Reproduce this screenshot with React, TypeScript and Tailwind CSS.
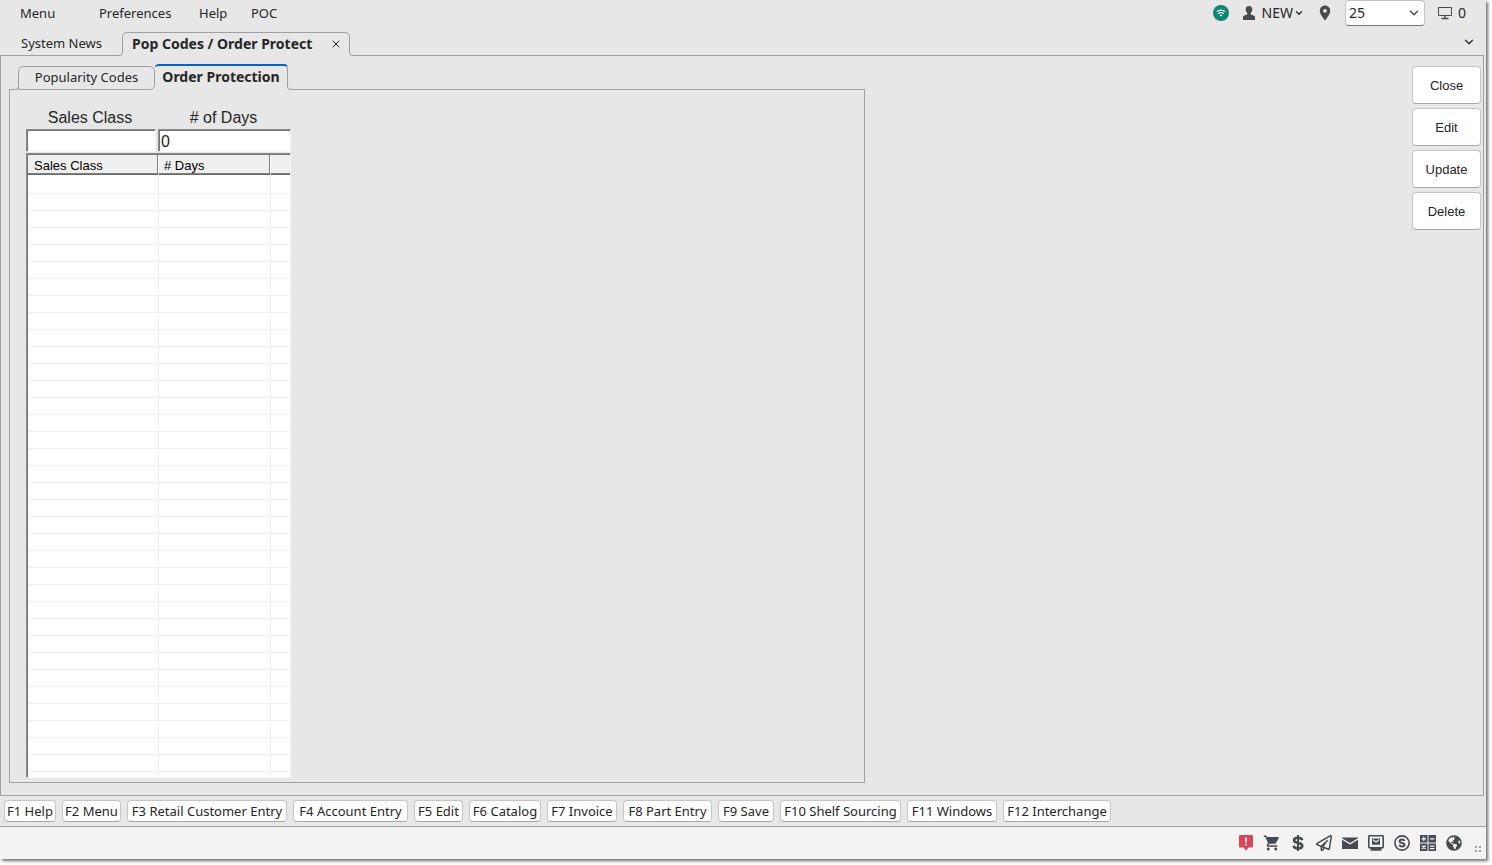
import { useState } from 'react';
import type { ReactNode } from 'react';
import { ChevronDown, X } from 'lucide-react';
import { FaRegPaperPlane, FaGlobeAmericas } from 'react-icons/fa';
import { MdShoppingCart, MdLocationOn } from 'react-icons/md';

const functionKeys = [
  { label: 'F1 Help', width: 'w-[52px]' },
  { label: 'F2 Menu', width: 'w-[59px]' },
  { label: 'F3 Retail Customer Entry', width: 'w-[160px]' },
  { label: 'F4 Account Entry', width: 'w-[115px]' },
  { label: 'F5 Edit', width: 'w-[49px]' },
  { label: 'F6 Catalog', width: 'w-[72px]' },
  { label: 'F7 Invoice', width: 'w-[70px]' },
  { label: 'F8 Part Entry', width: 'w-[89px]' },
  { label: 'F9 Save', width: 'w-[56px]' },
  { label: 'F10 Shelf Sourcing', width: 'w-[121px]' },
  { label: 'F11 Windows', width: 'w-[90px]' },
  { label: 'F12 Interchange', width: 'w-[108px]' },
];

const actions = ['Close', 'Edit', 'Update', 'Delete'];

const emptyRows = Array.from({ length: 36 }, (_, i) => i);

function WifiBadge() {
  return (
    <svg className="h-4 w-4" viewBox="0 0 16 16" fill="none">
      <circle cx="8" cy="8" r="8" fill="#0f8573" />
      <path d="M3.8 6.8a6 6 0 0 1 8.4 0M5.4 8.7a3.7 3.7 0 0 1 5.2 0" stroke="#fff" strokeWidth="1.2" />
      <path d="M6.6 10.2a2 2 0 0 1 2.8 0L8 11.6z" fill="#fff" />
    </svg>
  );
}

function UserIcon() {
  return (
    <svg className="h-4 w-3" viewBox="0 0 12 16" fill="currentColor">
      <path d="M6 1c2.200 0 3.300 1.400 3.300 3.300 0 1.600-.7 3-1.500 3.700v1.400l2.800 1c.9.300 1.400.9 1.400 1.900V15H0v-2.700c0-1 .5-1.600 1.400-1.900l2.800-1V8c-.8-.7-1.500-2.100-1.500-3.700C2.700 2.400 3.800 1 6 1z" />
    </svg>
  );
}

function MonitorIcon() {
  return (
    <svg className="h-4 w-4" viewBox="0 0 16 16" fill="none" stroke="currentColor">
      <path d="M1.500 2.500h13v8h-13z" />
      <path d="M8 10.500v3M4.500 13.500h7" strokeWidth="1.400" />
    </svg>
  );
}

function AlertIcon() {
  return (
    <svg className="h-4 w-4" viewBox="0 0 16 16">
      <path d="M2 0h12a1 1 0 0 1 1 1v10.500a1 1 0 0 1-1 1h-3.500L8 15.500l-2.500-3H2a1 1 0 0 1-1-1V1a1 1 0 0 1 1-1z" fill="#d9485a" />
      <path d="M8 2.500v5M8 8.800v1.700" stroke="#fff" strokeWidth="1.600" />
    </svg>
  );
}

function DollarIcon() {
  return (
    <svg className="h-4 w-4" viewBox="0 0 16 16" fill="none" stroke="currentColor">
      <path d="M12.200 5.200C11.800 3.600 10.300 2.700 8 2.700S4.100 3.600 4.100 5.200c0 3.900 8.200 1.500 8.200 5.500 0 1.700-1.700 2.700-4.300 2.700S3.900 12.400 3.600 10.700" strokeWidth="2.600" />
      <path d="M8 0v16" strokeWidth="2" />
    </svg>
  );
}

function MailIcon() {
  return (
    <svg className="h-4 w-4" viewBox="0 0 16 16" fill="currentColor">
      <path d="M0 3.200 8 8l8-4.800V2.500H0z" />
      <path d="M0 4.700v9.300h16V4.700L8 9.500z" />
    </svg>
  );
}

function MailScreenIcon() {
  return (
    <svg className="h-4 w-4" viewBox="0 0 16 16" fill="none">
      <path d="M1.500.8h13q.7 0 .7.700v10.500q0 .7-.7.700h-13q-.7 0-.7-.7V1.500q0-.7.700-.7z" stroke="currentColor" strokeWidth="1.600" />
      <path d="M4 3.500h8v6.200H4z" fill="currentColor" />
      <path d="m5 4.800 3 2.200 3-2.200" stroke="#f3f3f3" strokeWidth="1.200" />
      <path d="M2.500 13h11v2.700h-11z" fill="currentColor" />
    </svg>
  );
}

function CircleSIcon() {
  return (
    <svg className="h-4 w-4" viewBox="0 0 16 16" fill="none" stroke="currentColor">
      <circle cx="8" cy="8" r="7.100" strokeWidth="1.600" />
      <path d="M10.500 6c-.3-1-1.200-1.500-2.500-1.500S5.600 5.100 5.600 6.200c0 2.500 4.900 1 4.900 3.500 0 1.200-1.100 1.800-2.500 1.800s-2.400-.6-2.700-1.700" strokeWidth="1.900" />
    </svg>
  );
}

function CalculatorIcon() {
  return (
    <svg className="h-4 w-4" viewBox="0 0 16 16" fill="none">
      <path d="M0 0h7.500v7.500H0zM8.500 0H16v7.500H8.500zM0 8.500h7.500V16H0zM8.500 8.500H16V16H8.500z" fill="currentColor" />
      <path
        d="M3.800 1.500v4.500M1.500 3.800h4.500M10 3.800h4.500M2 10.500l3.500 3.500M5.500 10.500 2 14M10 11.200h4.500M10 13.600h4.500"
        stroke="#f3f3f3"
        strokeWidth="1.200"
      />
    </svg>
  );
}

function Grip() {
  return (
    <svg className="h-2 w-2" viewBox="0 0 8 8" fill="#9a9a9a">
      <path d="M1 1h2v2H1zM5 1h2v2H5zM1 5h2v2H1zM5 5h2v2H5z" />
    </svg>
  );
}

function StatusButton({ label, children }: { label: string; children: ReactNode }) {
  return (
    <button aria-label={label} className="flex h-4 w-4 items-center justify-center">
      {children}
    </button>
  );
}

export default function App() {
  const [store, setStore] = useState('25');
  const [salesClass, setSalesClass] = useState('');
  const [days, setDays] = useState('0');

  return (
    <div className="h-screen bg-white pr-1.5 pb-1.5 font-['Noto_Sans',sans-serif] text-[13px] text-[#262626]">
      <div className="flex h-full flex-col bg-[#e7e7e7] shadow-[2px_2px_3px_#707070]">
        <header className="flex h-7 shrink-0 items-start justify-between pr-5 pl-5">
          <nav className="flex leading-[26px]">
            <button className="w-[79px] text-left">Menu</button>
            <button className="w-[100px] text-left">Preferences</button>
            <button className="w-[52px] text-left">Help</button>
            <button className="text-left">POC</button>
          </nav>
          <div className="flex h-[26px] items-center text-sm text-[#454b50]">
            <WifiBadge />
            <button className="ml-[14px] flex items-center text-[#262626]">
              <span className="text-[#454b50]"><UserIcon /></span>
              <span className="ml-[7px]">NEW</span>
              <ChevronDown className="ml-px h-2.5 w-2.5" strokeWidth={3} />
            </button>
            <MdLocationOn className="ml-3 h-[18px] w-[18px]" />
            <div className="relative ml-[11px]">
              <select
                aria-label="Store"
                value={store}
                onChange={(e) => setStore(e.target.value)}
                className="h-[26px] w-20 appearance-none rounded border border-[#c4c4c4] border-b-[#777] bg-white pl-[3px] text-[#262626]"
              >
                <option value="25">25</option>
              </select>
              <ChevronDown className="pointer-events-none absolute top-1.5 right-1 h-3.5 w-3.5" strokeWidth={2.4} />
            </div>
            <span className="ml-3 flex items-center gap-[5px]">
              <MonitorIcon />
              <span className="text-[#262626]">0</span>
            </span>
          </div>
        </header>

        {/* window tabs */}
        <div className="flex h-7 shrink-0 items-end pr-0.5">
          <button className="h-7 w-[118px] border-b border-[#a0a0a0] pt-1 pl-[21px] text-left">System News</button>
          <div className="h-[5px] w-[5px] rounded-br border-r border-b border-[#a0a0a0]" />
          <div className="-ml-px flex h-6 items-start">
            <div className="flex h-[19px] w-[228px] items-start justify-between rounded-t-[5px] border border-b-0 border-[#a0a0a0] pt-px pr-[7px] pl-[9px]">
              <button className="text-sm font-bold">Pop Codes / Order Protect</button>
              <button aria-label="Close tab" className="mt-1">
                <X className="h-3 w-3" strokeWidth={2} />
              </button>
            </div>
          </div>
          <div className="-ml-px h-[5px] w-[5px] rounded-bl border-b border-l border-[#a0a0a0]" />
          <div className="flex h-7 flex-1 justify-end border-b border-[#a0a0a0] pr-2">
            <button aria-label="Show windows" className="h-7">
              <ChevronDown className="h-3.5 w-3.5" strokeWidth={2.2} />
            </button>
          </div>
        </div>

        <main className="mr-0.5 flex min-h-0 flex-1 justify-between border-r border-b border-l border-[#a0a0a0] pt-2 pr-0.5 pb-3 pl-2">
          <div className="flex w-[856px] flex-col">
            <div className="flex h-[26px] shrink-0 items-end">
              <div className="w-[5px] self-stretch border-b border-[#a0a0a0]" />
              <div className="h-[5px] w-[5px] rounded-br border-r border-b border-[#a0a0a0]" />
              <button className="-ml-px h-6 w-[137px] rounded-t-[5px] rounded-br-[5px] border border-[#a0a0a0] text-center">
                Popularity Codes
              </button>
              <div className="flex h-[26px] items-start">
                <button className="h-[21px] w-[133px] rounded-t border-t-2 border-r border-t-[#0f62b5] border-r-[#a0a0a0] pt-px text-center text-sm leading-5 font-bold">
                  Order Protection
                </button>
              </div>
              <div className="-ml-px h-[5px] w-[5px] rounded-bl border-b border-l border-[#a0a0a0]" />
              <div className="flex-1 self-stretch border-b border-[#a0a0a0]" />
            </div>

            <section className="min-h-0 flex-1 border border-t-0 border-[#a0a0a0] pt-4 pb-1 pl-4">
              <div className="flex h-full w-[265px] flex-col font-['Liberation_Sans',Arial,sans-serif]">
                <div className="mb-px flex gap-0.5 text-base leading-[23px]">
                  <div className="flex w-[130px] flex-col">
                    <label htmlFor="sales-class" className="pr-0.5 text-center">Sales Class</label>
                    <input
                      id="sales-class"
                      value={salesClass}
                      onChange={(e) => setSalesClass(e.target.value)}
                      className="h-[23px] border border-[#8c8c8c] border-r-[#f8f8f8] border-b-[#f8f8f8] bg-white px-0.5 pt-0.5 shadow-[inset_1px_1px_#777]"
                    />
                  </div>
                  <div className="flex flex-1 flex-col">
                    <label htmlFor="days" className="pr-0.5 text-center"># of Days</label>
                    <input
                      id="days"
                      value={days}
                      onChange={(e) => setDays(e.target.value)}
                      className="h-[23px] w-full border border-[#8c8c8c] border-r-[#f8f8f8] border-b-[#f8f8f8] bg-white px-0.5 pt-0.5 shadow-[inset_1px_1px_#777]"
                    />
                  </div>
                </div>
                <div className="min-h-0 flex-1 overflow-hidden border border-[#8c8c8c] border-r-[#f8f8f8] border-b-[#f8f8f8] bg-white pt-px pl-px shadow-[inset_1px_1px_#777]">
                  <table className="w-full table-fixed border-separate border-spacing-0 text-[13px] text-black">
                    <thead>
                      <tr className="h-5 bg-[#efefef] text-left leading-[17px]">
                        <th className="w-[131px] border-r border-b border-r-white border-b-[#696969] p-0 pt-0.5 pl-1.5 font-normal shadow-[inset_-1px_-1px_#808080]">
                          Sales Class
                        </th>
                        <th className="w-28 border-r border-b border-r-white border-b-[#696969] p-0 pt-0.5 pl-[5px] font-normal shadow-[inset_-1px_-1px_#808080]">
                          # Days
                        </th>
                        <th className="border-b border-[#696969] p-0 shadow-[inset_0_-1px_#808080]" />
                      </tr>
                    </thead>
                    <tbody>
                      {emptyRows.map((row) => (
                        <tr key={row} className="h-[17px] first:h-[19px]">
                          <td className="border-r border-b border-[#efefef] p-0" />
                          <td className="border-r border-b border-[#efefef] p-0" />
                          <td className="border-b border-[#efefef] p-0" />
                        </tr>
                      ))}
                    </tbody>
                  </table>
                </div>
              </div>
            </section>
          </div>

          <aside className="flex w-[69px] flex-col gap-1 pt-0.5 font-['Liberation_Sans',Arial,sans-serif]">
            {actions.map((action) => (
              <button key={action} className="h-[38px] rounded border border-[#c6c6c6] border-b-[#a8a8a8] bg-white pt-0.5 text-[13px]">
                {action}
              </button>
            ))}
          </aside>
        </main>

        <div className="flex h-[31px] shrink-0 items-center gap-1.5 border-b border-[#a0a0a0] pl-1">
          {functionKeys.map((key) => (
            <button
              key={key.label}
              className={`${key.width} flex h-[22px] shrink-0 items-center justify-center rounded border border-[#c6c6c6] border-b-[#a8a8a8] bg-white pt-px whitespace-nowrap`}
            >
              {key.label}
            </button>
          ))}
        </div>

        <footer className="flex h-8 shrink-0 items-center justify-end gap-2.5 bg-[#f3f3f3] pr-1 text-[#454b50]">
          <StatusButton label="Alerts"><AlertIcon /></StatusButton>
          <StatusButton label="Cart"><MdShoppingCart className="h-[18px] w-[18px] shrink-0" /></StatusButton>
          <StatusButton label="Pricing"><DollarIcon /></StatusButton>
          <StatusButton label="Send"><FaRegPaperPlane className="h-4 w-4" /></StatusButton>
          <StatusButton label="Mail"><MailIcon /></StatusButton>
          <StatusButton label="Messages"><MailScreenIcon /></StatusButton>
          <StatusButton label="Sourcing"><CircleSIcon /></StatusButton>
          <StatusButton label="Calculator"><CalculatorIcon /></StatusButton>
          <StatusButton label="Web"><FaGlobeAmericas className="h-4 w-4" /></StatusButton>
          <span className="ml-0.5 pt-3"><Grip /></span>
        </footer>
      </div>
    </div>
  );
}
